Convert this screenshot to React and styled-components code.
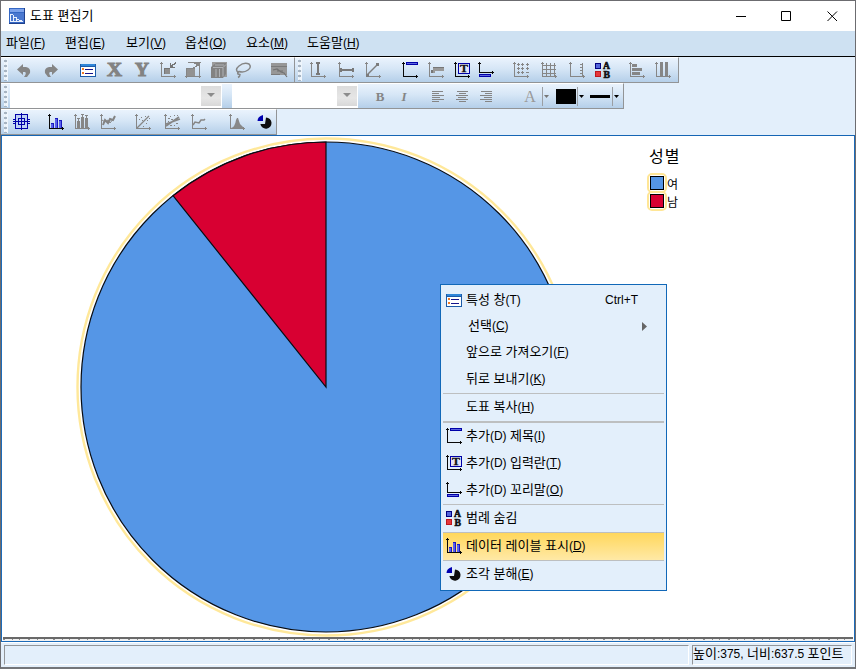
import React from "react";
import styled, { createGlobalStyle, css } from "styled-components";

const GREY = "#868686";
const NAVY = "#0000a8";
const BLUE = "#5596e6";
const RED = "#d80032";

const Global = createGlobalStyle`
  *, *::before { box-sizing: border-box; }
  html, body { margin: 0; padding: 0; overflow: hidden; }
  body { font: 13px/16px "Liberation Sans", "Noto Sans CJK KR", sans-serif; color: #000; cursor: default; }
  svg { display: block; flex: none; overflow: visible; }
`;

const Window = styled.div`
  display: flex;
  flex-direction: column;
  width: 856px;
  height: 669px;
  background: #e3effb;
  border: 1px solid #6c6c70;
  border-bottom: 2px solid #737579;
`;

const TitleBar = styled.header`
  display: flex;
  align-items: center;
  height: 30px;
  background: #fff;
  padding: 0 0 1px 8px;
`;

const TitleText = styled.div`
  flex: 1;
  margin-left: 5px;
  white-space: pre;
`;

const WindowButtons = styled.div`
  display: flex;
  gap: 30px;
  margin-right: 13px;
`;

const MenuBar = styled.nav`
  display: flex;
  gap: 20px;
  height: 25px;
  padding: 4px 0 0 5px;
  background: #cee1f2;
`;

const MenuEntry = styled.div`
  display: flex;
  width: ${(p) => p.$w || 40}px;
  white-space: pre;
`;

const Latin = styled.span`
  font-size: 12px;
`;

const Mnemonic = styled.u`
  text-decoration: underline;
  text-underline-offset: 1px;
  text-decoration-thickness: 1px;
  text-decoration-skip-ink: none;
`;

const Toolbars = styled.div`
  border-top: 1px solid #000;
  border-bottom: 1px solid #1565b4;
  height: 80px;
  display: flex;
  flex-direction: column;
`;

const ToolRow = styled.div`
  display: flex;
  height: 26px;
`;

const ToolGroup = styled.div`
  display: flex;
  align-items: flex-start;
  width: ${(p) => p.$w}px;
  height: 26px;
  padding: 3px 0 0 3px;
  background: linear-gradient(#eaf3fd, #d6e6f6 45%, #b5cfe9);
  border-top: 1px solid #fff;
  border-right: 1px solid #929496;
  border-bottom: 1px solid #929496;
`;

const Grip = styled.i`
  width: 4px;
  height: 22px;
  margin-top: -2px;
  background:
    radial-gradient(circle at 1.5px 2px, #a6b3c1 1.1px, transparent 1.6px) 0 0 / 4px 5px,
    #eef5fc;
`;

const Tool = styled.span`
  display: block;
  flex: none;
  margin-left: ${(p) => p.$gap || 0}px;
  height: 18px;
`;

const Combo = styled.div`
  display: flex;
  justify-content: flex-end;
  width: ${(p) => p.$w}px;
  height: 24px;
  margin: -3px 0 0 ${(p) => p.$gap}px;
  padding: 2px 1px;
  background: #fff;
`;

const ComboArrow = styled.span`
  display: flex;
  align-items: center;
  justify-content: center;
  width: 20px;
  height: 20px;
  padding-bottom: 2px;
  background: linear-gradient(#dcdcdc, #e6e6e6 60%, #d8d8d8);
`;

const FormatLetter = styled.span`
  width: 14px;
  margin: 2px 0 0 ${(p) => p.$gap}px;
  font: ${(p) => (p.$italic ? "italic" : "normal")} bold 13px/16px "Liberation Serif", serif;
  color: #858585;
  text-align: center;
  ${(p) => p.$large && css`font-size: 16px; font-weight: normal; color: #999;`}
`;

const AlignMark = styled.span`
  display: flex;
  flex-direction: column;
  gap: 1px;
  width: 12px;
  margin: 4px 0 0 ${(p) => p.$gap}px;
  align-items: ${(p) => p.$side};
`;

const AlignLine = styled.i`
  height: 1px;
  width: ${(p) => p.$w}px;
  background: #858585;
`;

const Swatch = styled.span`
  width: 20px;
  height: ${(p) => p.$h}px;
  margin: ${(p) => p.$top}px 1px 0 ${(p) => p.$gap}px;
  background: #000;
`;

const DropMark = styled.span`
  display: flex;
  align-items: center;
  height: 19px;
  width: 7px;
  margin-left: ${(p) => p.$gap || 0}px;
  padding-left: 1px;
  border-left: 1px solid #9b9fa4;
`;

const ChartArea = styled.main`
  display: flex;
  align-items: flex-start;
  height: 506px;
  background: #fff;
  border: 1px solid #1c6bb9;
  border-top: 0;
  flex-direction: column;
`;

const Plot = styled.div`
  display: flex;
  height: 501px;
`;

const Ruler = styled.div`
  width: 850px;
  height: 4px;
  margin-left: 1px;
  border-top: 2px solid #696969;
  background:
    repeating-linear-gradient(90deg, #8c8c8c 0 2px, transparent 2px 9px, #8c8c8c 9px 10px, transparent 10px 16px, #8c8c8c 16px 17px, transparent 17px 25px) 0 0 / 100% 1px no-repeat,
    #f1f1f1;
`;

const Legend = styled.section`
  padding: 9px 0 0 45px;
`;

const LegendTitle = styled.h1`
  margin: 0 0 5px 2px;
  font: 16px/24px "Liberation Sans", "Noto Sans CJK KR", sans-serif;
  letter-spacing: 1px;
`;

const LegendItem = styled.div`
  display: flex;
  align-items: center;
  height: 18px;
`;

const LegendKey = styled.i`
  display: flex;
  flex: none;
  align-items: center;
  justify-content: center;
  width: 20px;
  height: 20px;
  border: 2px solid #ffe696;
  border-radius: 5px;
  &::before {
    content: "";
    width: 14px;
    height: 14px;
    border: 1px solid #000;
    background: ${(p) => p.$color};
  }
`;

const LegendText = styled.span`
  padding-top: 3px;
  font-size: 12px;
`;

const StatusBar = styled.footer`
  display: flex;
  gap: 3px;
  height: 25px;
  padding: 2px 3px 3px 3px;
  border-top: 1px solid #fff;
`;

const StatusPanel = styled.div`
  width: ${(p) => p.$w}px;
  height: 20px;
  border: 1px solid;
  border-color: #929598 #fff #fff #929598;
  white-space: pre;
`;

const ContextMenu = styled.div`
  position: absolute;
  left: 440px;
  top: 284px;
  width: 227px;
  height: 307px;
  padding: 2px;
  background: #e3effb;
  border: 1px solid #1168b8;
`;

const ContextItem = styled.div`
  display: flex;
  align-items: center;
  height: ${(p) => p.$h || 27}px;
  padding: 0 ${(p) => (p.$submenu ? 17 : 26)}px ${(p) => (p.$h ? 0 : 2)}px 0;
  white-space: pre;
  background: ${(p) => (p.$active ? "linear-gradient(#ffd75c, #ffe9a6)" : "none")};
`;

const ContextIcon = styled.span`
  width: ${(p) => (p.$indent ? 25 : 23)}px;
  padding-left: 2px;
  flex: none;
`;

const ContextText = styled.span`
  flex: 1;
`;

const Rule = styled.hr`
  margin: 0;
  border: 0;
  height: ${(p) => p.$h || 1}px;
  background: #bdbfc0;
`;

const GlyphText = styled.text`
  font: bold ${(p) => p.$size}px "Liberation Serif", serif;
  fill: ${(p) => p.$fill || "#111"};
  stroke: ${(p) => p.$fill || "#111"};
  stroke-width: ${(p) => p.$stroke || 0.3}px;
`;

function Glyph({ children, w = 18, h = 18 }) {
  return (
    <svg width={w} height={h} viewBox={`0 0 ${w} ${h}`} shapeRendering="crispEdges">
      {children}
    </svg>
  );
}

function Axes({ color = GREY, down = 0 }) {
  const y = 15 - down;
  return (
    <path fill={color} d={`M2 1h1v${15 - down}h-1zM1 2h3v1h-3zM2 ${y}h15v1h-15zM15 ${y - 1}h1v3h-1z`} />
  );
}

const smooth = { shapeRendering: "geometricPrecision" };

const icons = {
  app: (
    <Glyph w={16} h={16}>
      <rect width="16" height="16" fill="#3467c4" />
      <path fill="#7da2ea" d="M1 1h14v3H1z" />
      <path fill="#4a78d0" d="M1 5h14v9H1z" />
      <path fill="#e9f0fd" d="M1 6h1v8H1zM4 7h1v7H4zM7 9h1v5H7zM10 12h3v1h-3zM2 6h2v1H2zM5 9h2v1H5zM8 11h2v1H8zM1 13h13v1H1z" />
      <path fill="#1f408c" d="M0 15h16v1H0zM15 0h1v16h-1z" />
    </Glyph>
  ),
  undo: (
    <Glyph>
      <path {...smooth} fill="#858585" d="M2 8.5 8 3v3h3q5 1 4 6l-3 4h-3q3-4 1-5H8v3z" />
    </Glyph>
  ),
  redo: (
    <Glyph>
      <path {...smooth} fill="#858585" d="M15 8.5 9 3v3H6q-5 1-4 6l3 4h3q-3-4-1-5h2v3z" />
    </Glyph>
  ),
  props: (
    <Glyph>
      <path fill="#1c5ba8" d="M1 3h16v13H1z" />
      <path fill="#2f86d8" d="M2 3h14v2H2z" />
      <path fill="#fff" d="M2 6h14v9H2z" />
      <path fill="#f27a22" d="M3 7h2v2H3zM3 11h2v2H3z" />
      <path fill="#14148c" d="M6 8h8v1H6zM6 12h8v1H6z" />
    </Glyph>
  ),
  x: (
    <Glyph>
      <GlyphText x="1" y="15" $size={18} $fill="#838383" $stroke={1} textLength="15" lengthAdjust="spacingAndGlyphs">X</GlyphText>
    </Glyph>
  ),
  y: (
    <Glyph>
      <GlyphText x="2" y="15" $size={18} $fill="#838383" $stroke={1} textLength="14" lengthAdjust="spacingAndGlyphs">Y</GlyphText>
    </Glyph>
  ),
  shrink: (
    <Glyph>
      <Axes />
      <path fill="#8e8e8e" d="M5 7h6v6H5z" />
      <path fill="#757575" d="M5 7h6v1H5zM5 7h1v6H5zM11 2h1v4h4v1h-5zM12 4h2v2h-2zM13 3h3v1h-3zM15 2h2v1h-2zM16 1h1v1h-1z" />
    </Glyph>
  ),
  grow: (
    <Glyph>
      <path fill="#929292" d="M2 7h9v9H2z" />
      <path fill={GREY} d="M2 7h9v1H2zM2 7h1v10H2zM4 1h13v1H4zM15 1h1v16h-1zM1 15h16v1H1zM10 2h5v1h-5zM12 3h3v2h-3zM11 5h2v1h-2zM9 6h2v1H9z" />
    </Glyph>
  ),
  cube: (
    <Glyph>
      <path fill="#9c9c9c" d="M2 1h15v15H2z" />
      <path {...smooth} fill="#828282" d="m1 6 5-4h10v11l-3 4H1z" />
      <path {...smooth} fill="none" stroke="#b4b8bc" strokeWidth="0.9" d="M3 6.5h10v9M13 6.5l3-3M5 4h9M6 8v8M9.5 8v8" />
    </Glyph>
  ),
  lasso: (
    <Glyph>
      <path {...smooth} fill="none" stroke="#858585" strokeWidth="1.5" d="M5 11.5Q0 9 5 5q5-4 10-2 3 3-1 6-4 3-9 1.500-2 1-1 2.500l2 .5q0 2-2 3" />
    </Glyph>
  ),
  screen: (
    <Glyph>
      <path fill="#979797" d="M1 2h16v12H1z" />
      <path fill="#7a7a7a" d="M1 5h16v1H1zM1 13h9v1H1z" />
      <path {...smooth} fill="none" stroke="#737373" strokeWidth="1.2" d="m3 9 4-1 4 3 3 1 3 4M7 10h6" />
    </Glyph>
  ),
  refY: (
    <Glyph>
      <Axes />
      <path fill="#797979" d="M8 2h2v12H8zM7 1h4v2H7zM7 12h4v2H7z" />
    </Glyph>
  ),
  refX: (
    <Glyph>
      <Axes />
      <path fill="#797979" d="M3 8h13v2H3zM3 7h2v4H3zM15 7h2v4h-2z" />
    </Glyph>
  ),
  refLine: (
    <Glyph>
      <Axes />
      <path {...smooth} stroke="#7e7e7e" strokeWidth="1.5" d="m3 14 11-11" />
      <path fill="#7c7c7c" d="M2 13h3v3H2zM12 2h3v3h-3z" />
    </Glyph>
  ),
  title: (
    <Glyph>
      <Axes color="#080808" />
      <path fill={NAVY} d="M5 1h12v3H5z" />
      <path fill="#5f68e0" d="M6 2h10v1H6z" />
    </Glyph>
  ),
  annotation: (
    <Glyph>
      <Axes />
      <path fill="#999" d="M6 6h11v4H6zM4 9h4v3H4z" />
      <path fill="#777" d="M6 6h11v1H6zM4 9h2v3H4z" />
    </Glyph>
  ),
  textBox: (
    <Glyph>
      <Axes color="#080808" />
      <path fill={NAVY} d="M5 2h12v11H5z" />
      <path fill="#e3e5f8" d="M6 3h10v9H6z" />
      <GlyphText x="7" y="11" $size={11} textLength="8" lengthAdjust="spacingAndGlyphs">T</GlyphText>
    </Glyph>
  ),
  footnote: (
    <Glyph>
      <Axes color="#080808" down={4} />
      <path fill={NAVY} d="M2 13h12v3H2z" />
      <path fill="#5f68e0" d="M3 14h10v1H3z" />
    </Glyph>
  ),
  dots: (
    <Glyph>
      <Axes />
      <path fill={GREY} d="M5 3h3v1H5zM6 2h1v3H6zM9 3h3v1H9zM10 2h1v3h-1zM14 3h3v1h-3zM15 2h1v3h-1zM5 7h3v1H5zM6 6h1v3H6zM9 7h3v1H9zM10 6h1v3h-1zM14 7h3v1h-3zM15 6h1v3h-1zM5 11h3v1H5zM6 10h1v3H6zM9 11h3v1H9zM10 10h1v3h-1zM14 11h3v1h-3z" />
    </Glyph>
  ),
  grid: (
    <Glyph>
      <Axes />
      <path fill={GREY} d="M3 4h13v1H3zM3 8h13v1H3zM3 12h13v1H3zM6 2h1v14H6zM10 2h1v14h-1zM14 2h1v14h-1z" />
    </Glyph>
  ),
  derived: (
    <Glyph>
      <Axes />
      <path fill={GREY} d="M14 2h1v13h-1zM12 3h2v1h-2zM12 6h2v1h-2zM12 9h2v1h-2zM12 12h2v1h-2z" />
    </Glyph>
  ),
  legend: (
    <Glyph>
      <path fill="#000080" d="M1 2h6v6H1z" />
      <path fill="#5366db" d="M2 3h4v4H2z" />
      <path fill="#bf171d" d="M1 10h6v6H1z" />
      <path fill="#e5383c" d="M2 11h4v4H2z" />
      <GlyphText x="9" y="8" $size={9.5} $stroke={0.6} textLength="7" lengthAdjust="spacingAndGlyphs">A</GlyphText>
      <GlyphText x="9.500" y="17" $size={9.5} $stroke={0.6} textLength="6.500" lengthAdjust="spacingAndGlyphs">B</GlyphText>
    </Glyph>
  ),
  bars: (
    <Glyph>
      <Axes />
      <path fill={GREY} d="M4 3h5v3H4zM4 7h10v3H4zM4 11h8v3H4z" />
    </Glyph>
  ),
  columns: (
    <Glyph>
      <Axes />
      <path fill={GREY} d="M6 1h3v14H6zM11 1h3v14h-3z" />
    </Glyph>
  ),
  target: (
    <Glyph>
      <path fill="#bed1f4" d="M3 2h12v13H3z" />
      <path fill="none" stroke={NAVY} d="M3.5 1.5h12v14h-12zM6.5 5.5h6v6h-6z" />
      <path fill={NAVY} d="M1 8h17v1H1zM9 0h1v17H9z" />
      <path fill={NAVY} d="M1 6h3v1H1zM1 10h3v1H1zM15 6h3v1h-3zM15 10h3v1h-3z" />
    </Glyph>
  ),
  histogram: (
    <Glyph>
      <Axes color="#080808" />
      <path fill="#1818bd" d="M4 10h3v5H4zM8 5h3v10H8zM12 7h3v8h-3z" />
      <path fill="#5960ed" d="M4 11h2v4H4zM8 6h2v9H8zM12 8h2v7h-2z" />
    </Glyph>
  ),
  errorBars: (
    <Glyph>
      <Axes />
      <path fill={GREY} d="M4 8h3v7H4zM8 4h3v11H8zM12 5h3v10h-3zM5 5h1v3H5zM4 5h3v1H4zM9 1h1v3H9zM8 1h3v1H8zM13 2h1v3h-1zM12 2h3v1h-3z" />
    </Glyph>
  ),
  zigzag: (
    <Glyph>
      <Axes />
      <path {...smooth} fill="none" stroke="#838383" strokeWidth="2" d="m4 12 2-5 3 3 2-4 3 1 2-4" />
      <path {...smooth} fill="none" stroke={GREY} d="m3 7 3 2 3-2 2 3 4-5" />
    </Glyph>
  ),
  fit: (
    <Glyph>
      <Axes />
      <path {...smooth} fill="none" stroke={GREY} strokeWidth="1.3" d="m3 15 12-12" />
      <path fill={GREY} d="M5 6h1v1H5zM7 4h1v1H7zM8 7h1v1H8zM11 3h1v1h-1zM13 7h1v1h-1zM12 10h1v1h-1zM15 5h1v1h-1zM9 13h1v1H9z" />
    </Glyph>
  ),
  fitGroup: (
    <Glyph>
      <Axes />
      <path {...smooth} fill="none" stroke={GREY} strokeWidth="1.6" d="m3 13 13-9M3 11l14-5" />
      <path fill={GREY} d="M5 5h2v1H5zM7 3h1v1H7zM8 6h2v1H8zM11 2h1v1h-1zM14 2h1v1h-1zM5 8h1v1H5zM13 10h2v1h-2zM11 12h1v1h-1zM7 12h2v1H7z" />
    </Glyph>
  ),
  curve: (
    <Glyph>
      <Axes />
      <path {...smooth} fill="none" stroke={GREY} strokeWidth="1.5" d="m3 12 2-3 4 1 2-3h3l1-1" />
    </Glyph>
  ),
  normal: (
    <Glyph>
      <Axes />
      <path {...smooth} fill="#888" d="M3 15q4-1 5-8l1-2h1l2 6 4 4z" />
    </Glyph>
  ),
  pie: (
    <Glyph>
      <path {...smooth} fill="#0d0d0d" d="M10 4.500a5.600 5.600 0 1 1-5.600 6.500H9z" />
      <path {...smooth} fill="#0000b0" d="M7 2v6H1.500q0-4.500 5.500-6z" />
    </Glyph>
  ),
};

function Arrow({ color = "#000", w = 5 }) {
  return (
    <svg width={w} height={Math.ceil(w / 2)} viewBox={`0 0 ${w} ${Math.ceil(w / 2)}`}>
      <path fill={color} d={`M0 0h${w}L${w / 2} ${Math.ceil(w / 2)}z`} />
    </svg>
  );
}

function Tools({ items }) {
  return items.map(([name, gap]) => (
    <Tool key={name} $gap={gap}>{icons[name]}</Tool>
  ));
}

function Key({ k }) {
  return <Latin>(<Mnemonic>{k}</Mnemonic>)</Latin>;
}

function Align({ side, gap }) {
  return (
    <AlignMark $side={side} $gap={gap}>
      {[11, 7, 12, 8, 12, 7].map((w, i) => <AlignLine key={i} $w={w} />)}
    </AlignMark>
  );
}

function Item({ icon, indent, h, active, children, shortcut, submenu }) {
  return (
    <ContextItem $h={h} $active={active} $submenu={submenu}>
      <ContextIcon $indent={indent}>{icon && icons[icon]}</ContextIcon>
      <ContextText>{children}</ContextText>
      {shortcut}
      {submenu && <svg width="6" height="9"><path fill="#666" d="M1 0l5 4.500-5 4.500z" /></svg>}
    </ContextItem>
  );
}

const menus = [
  ["파일", "F", 39], ["편집", "E", 41], ["보기", "V", 39],
  ["옵션", "O", 41], ["요소", "M", 41], ["도움말", "H", 54],
];

export default function App() {
  return (
    <>
      <Global />
      <Window>
        <TitleBar>
          {icons.app}
          <TitleText>도표 편집기</TitleText>
          <WindowButtons>
            <svg width="16" height="16"><path fill="#000" d="M2 8h10v1H2z" /></svg>
            <svg width="16" height="16"><path fill="none" stroke="#000" d="M1.5 3.5h9v9h-9z" /></svg>
            <svg width="16" height="16"><path fill="none" stroke="#000" d="m1.5 3.5 9.5 9.5m0-9.500-9.500 9.500" /></svg>
          </WindowButtons>
        </TitleBar>
        <MenuBar>
          {menus.map(([t, k, w]) => <MenuEntry key={t} $w={w}>{t}<Key k={k} /></MenuEntry>)}
        </MenuBar>
        <Toolbars>
          <ToolRow>
            <ToolGroup $w={294}>
              <Grip />
              <Tools items={[["undo", 7], ["redo", 10], ["props", 18], ["x", 9], ["y", 9], ["shrink", 8], ["grow", 7], ["cube", 8], ["lasso", 6], ["screen", 18]]} />
            </ToolGroup>
            <ToolGroup $w={384}>
              <Grip />
              <Tools items={[["refY", 7], ["refX", 10], ["refLine", 9], ["title", 19], ["annotation", 8], ["textBox", 8], ["footnote", 6], ["dots", 17], ["grid", 10], ["derived", 10], ["legend", 8], ["bars", 16], ["columns", 8]]} />
            </ToolGroup>
          </ToolRow>
          <ToolRow>
            <ToolGroup $w={623}>
              <Grip />
              <Combo $w={212} $gap={2}><ComboArrow><Arrow color="#8c8c8c" w={8} /></ComboArrow></Combo>
              <Combo $w={126} $gap={10}><ComboArrow><Arrow color="#8c8c8c" w={8} /></ComboArrow></Combo>
              <FormatLetter $gap={15}>B</FormatLetter>
              <FormatLetter $gap={10} $italic>I</FormatLetter>
              <Align side="flex-start" gap={21} />
              <Align side="center" gap={12} />
              <Align side="flex-end" gap={12} />
              <FormatLetter $gap={31} $large>A</FormatLetter>
              <DropMark $gap={5}><Arrow color="#777" /></DropMark>
              <Swatch $gap={7} $h={15} $top={2} />
              <DropMark><Arrow /></DropMark>
              <Swatch $gap={6} $h={3} $top={8} />
              <DropMark $gap={1}><Arrow /></DropMark>
            </ToolGroup>
          </ToolRow>
          <ToolRow>
            <ToolGroup $w={276}>
              <Grip />
              <Tools items={[["target", 4], ["histogram", 17], ["errorBars", 8], ["zigzag", 8], ["fit", 17], ["fitGroup", 11], ["curve", 9], ["normal", 20], ["pie", 10]]} />
            </ToolGroup>
          </ToolRow>
        </Toolbars>
        <ChartArea>
          <Plot>
            <svg width="600" height="501" viewBox="2 136 600 501">
              <circle cx="326" cy="387" r="248.5" fill="none" stroke="#ffe89a" strokeWidth="2.4" />
              <circle cx="326" cy="387" r="245" fill={BLUE} stroke="#080c12" strokeWidth="1.2" />
              <path d="M326 387V142A245 245 0 0 0 173 195.7Z" fill={RED} stroke="#080c12" strokeWidth="1.2" />
            </svg>
            <Legend>
              <LegendTitle>성별</LegendTitle>
              <LegendItem><LegendKey $color={BLUE} /><LegendText>여</LegendText></LegendItem>
              <LegendItem><LegendKey $color={RED} /><LegendText>남</LegendText></LegendItem>
            </Legend>
          </Plot>
          <Ruler />
        </ChartArea>
        <StatusBar>
          <StatusPanel $w={685} />
          <StatusPanel $w={160}>높이<Latin>:375, </Latin>너비<Latin>:637.5 </Latin>포인트</StatusPanel>
        </StatusBar>
      </Window>
      <ContextMenu>
        <Item icon="props" h={26} shortcut={<Latin>Ctrl+T</Latin>}>특성 창<Latin>(T)</Latin></Item>
        <Item indent h={26} submenu>선택<Key k="C" /></Item>
        <Item h={26}>앞으로 가져오기<Key k="F" /></Item>
        <Item h={28}>뒤로 보내기<Key k="K" /></Item>
        <Rule />
        <Item>도표 복사<Key k="H" /></Item>
        <Rule $h={2} />
        <Item icon="title">추가<Latin>(D) </Latin>제목<Key k="I" /></Item>
        <Item icon="textBox">추가<Latin>(D) </Latin>입력란<Key k="T" /></Item>
        <Item icon="footnote">추가<Latin>(D) </Latin>꼬리말<Key k="O" /></Item>
        <Rule />
        <Item icon="legend">범례 숨김</Item>
        <Rule />
        <Item icon="histogram" active>데이터 레이블 표시<Key k="D" /></Item>
        <Rule />
        <Item icon="pie">조각 분해<Key k="E" /></Item>
      </ContextMenu>
    </>
  );
}
